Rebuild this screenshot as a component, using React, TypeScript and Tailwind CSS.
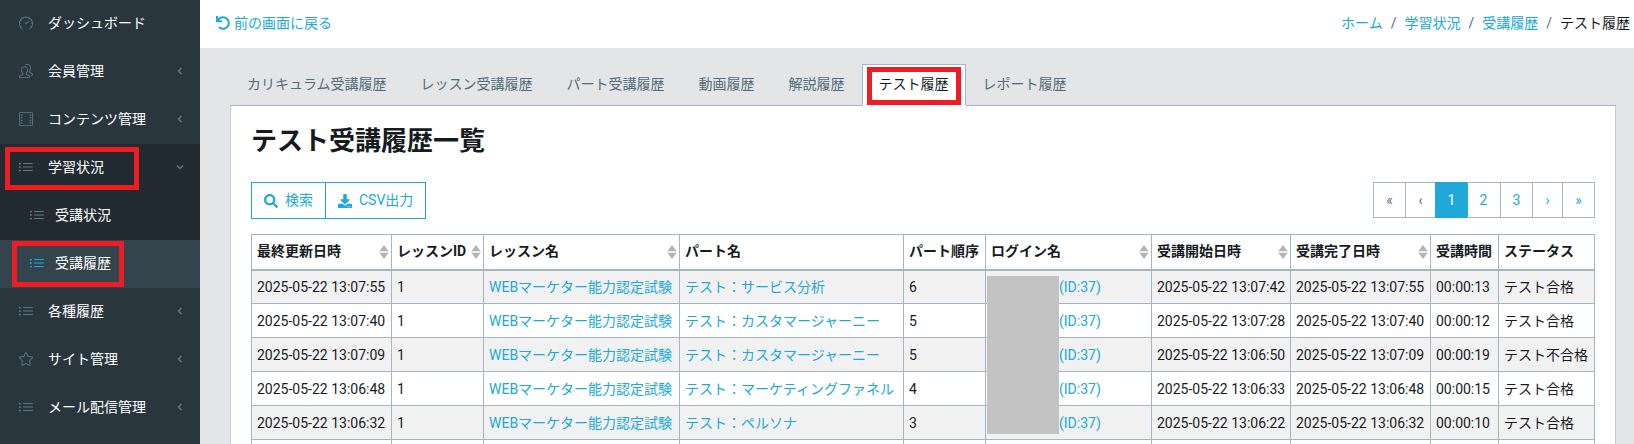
import type { ReactNode } from "react"
import type { IconType } from "react-icons"
import { FaDownload, FaSearch, FaUndo } from "react-icons/fa"
import { SlFilm, SlList, SlPeople, SlSpeedometer, SlStar } from "react-icons/sl"
import clsx from "clsx"

const tabs = [
  "カリキュラム受講履歴",
  "レッスン受講履歴",
  "パート受講履歴",
  "動画履歴",
  "解説履歴",
  "テスト履歴",
  "レポート履歴",
]

const columns = [
  { label: "最終更新日時", width: "w-[140px]", sortable: true },
  { label: "レッスンID", width: "w-[92px]", sortable: true },
  { label: "レッスン名", width: "w-[196px]", sortable: true },
  { label: "パート名", width: "w-[224px]" },
  { label: "パート順序", width: "w-[82px]" },
  { label: "ログイン名", width: "w-[166px]", sortable: true },
  { label: "受講開始日時", width: "w-[139px]", sortable: true },
  { label: "受講完了日時", width: "w-[140px]", sortable: true },
  { label: "受講時間", width: "w-[68px]" },
  { label: "ステータス", width: "w-[96px]" },
]

const rows = [
  { part: "テスト：サービス分析", order: 6, start: "13:07:42", end: "13:07:55", time: "00:00:13", status: "テスト合格" },
  { part: "テスト：カスタマージャーニー", order: 5, start: "13:07:28", end: "13:07:40", time: "00:00:12", status: "テスト合格" },
  { part: "テスト：カスタマージャーニー", order: 5, start: "13:06:50", end: "13:07:09", time: "00:00:19", status: "テスト不合格" },
  { part: "テスト：マーケティングファネル", order: 4, start: "13:06:33", end: "13:06:48", time: "00:00:15", status: "テスト合格" },
  { part: "テスト：ペルソナ", order: 3, start: "13:06:22", end: "13:06:32", time: "00:00:10", status: "テスト合格" },
]

const DATE = "2025-05-22"

/** Red frame that points the reader at a control. */
function Highlight({ className }: { className: string }) {
  return <span aria-hidden className={clsx("pointer-events-none absolute border-5 border-[#ee1c23]", className)} />
}

function Chevron({ open }: { open?: boolean }) {
  return (
    <svg viewBox="0 0 8 8" className={clsx("ml-auto h-2 w-2 text-[#5f7985]", open && "-rotate-90")} aria-hidden>
      <path d="M5.5 1 2.5 4l3 3" fill="none" stroke="currentColor" strokeWidth="1.5" />
    </svg>
  )
}

interface NavItemProps {
  icon: IconType
  label: string
  expandable?: boolean
  open?: boolean
  children?: ReactNode
}

function NavItem({ icon: Icon, label, expandable, open, children }: NavItemProps) {
  return (
    <a href="#" className="relative flex h-12 items-center pr-4 pb-[2px] pl-[19px] text-white">
      <Icon className="mr-[15px] h-[14px] w-[14px] shrink-0 text-[#5f7985]" />
      {label}
      {expandable && <Chevron open={open} />}
      {children}
    </a>
  )
}

function SubItem({ label, active }: { label: string; active?: boolean }) {
  return (
    <a href="#" className={clsx("relative flex h-12 items-center pb-[2px] pl-[30px] text-white", active && "bg-[#33444c]")}>
      <SlList className={clsx("mr-[11px] h-[14px] w-[14px] shrink-0", active ? "text-[#20a8d8]" : "text-[#5f7985]")} />
      {label}
      {active && <Highlight className="top-px left-3 h-[46px] w-28" />}
    </a>
  )
}

function Sidebar() {
  return (
    <nav className="w-[200px] shrink-0 bg-[#29363d]">
      <NavItem icon={SlSpeedometer} label="ダッシュボード" />
      <NavItem icon={SlPeople} label="会員管理" expandable />
      <NavItem icon={SlFilm} label="コンテンツ管理" expandable />
      <div className="bg-[#222b31]">
        <NavItem icon={SlList} label="学習状況" expandable open>
          <Highlight className="top-[3px] left-[5px] h-[43px] w-[134px]" />
        </NavItem>
        <SubItem label="受講状況" />
        <SubItem label="受講履歴" active />
      </div>
      <NavItem icon={SlList} label="各種履歴" expandable />
      <NavItem icon={SlStar} label="サイト管理" expandable />
      <NavItem icon={SlList} label="メール配信管理" expandable />
    </nav>
  )
}

function TopBar() {
  return (
    <header className="flex h-12 items-center justify-between bg-white pr-1 pb-[2px] pl-4">
      <a href="#" className="flex items-center gap-1 text-[#20a8d8]">
        <FaUndo className="h-[14px] w-[14px]" />
        前の画面に戻る
      </a>
      <ol className="flex gap-2">
        {["ホーム", "学習状況", "受講履歴"].map((label) => (
          <li key={label} className="flex gap-2">
            <a href="#" className="text-[#20a8d8]">{label}</a>
            <span className="text-[#536c79]">/</span>
          </li>
        ))}
        <li>テスト履歴</li>
      </ol>
    </header>
  )
}

function Tabs() {
  return (
    <div role="tablist" className="relative z-10 -mb-px flex">
      {tabs.map((label) => {
        const active = label === "テスト履歴"
        return (
          <button
            key={label}
            role="tab"
            aria-selected={active}
            className={clsx(
              "relative h-[42px] border px-4 pb-px",
              active ? "border-[#a4b7c1] border-b-white bg-white" : "border-transparent border-b-[#a4b7c1] text-[#536c79]",
            )}
          >
            {label}
            {active && <Highlight className="top-[2px] left-1 h-[38px] w-[94px]" />}
          </button>
        )
      })}
      <span className="flex-1 border-b border-[#a4b7c1]" />
    </div>
  )
}

function Pagination() {
  const item = "flex h-9 items-center justify-center border border-[#a4b7c1] -ml-px"
  return (
    <nav aria-label="ページ" className="flex pl-px text-[#20a8d8]">
      <button className={clsx(item, "w-[33px] text-[#536c79]")}>«</button>
      <button className={clsx(item, "w-[31px] text-[#536c79]")}>‹</button>
      <button className="-ml-px h-9 w-[33px] bg-[#20a8d8] text-white">1</button>
      <button className={clsx(item, "w-[34px] border-l-0")}>2</button>
      <button className={clsx(item, "w-[33px]")}>3</button>
      <button className={clsx(item, "w-[31px]")}>›</button>
      <button className={clsx(item, "w-[33px]")}>»</button>
    </nav>
  )
}

function SortIcon() {
  return (
    <svg viewBox="0 0 10 14" className="h-[14px] w-[10px] shrink-0 text-[#b4b4b4]" aria-hidden>
      <path d="M5 0 9.5 6h-9zM5 14 .5 8h9z" fill="currentColor" />
      <path d="M0 6.5h10v1H0z" fill="currentColor" opacity=".5" />
    </svg>
  )
}

function HistoryTable() {
  const cell = "border border-[#a4b7c1] px-[5px] pt-[2px] pb-0"
  return (
    <table className="mt-[15px] w-full table-fixed border-collapse text-left whitespace-nowrap">
      <colgroup>
        {columns.map((c) => (
          <col key={c.label} className={c.width} />
        ))}
      </colgroup>
      <thead>
        <tr className="h-[35px]">
          {columns.map((c) => (
            <th key={c.label} className="border border-b-2 border-[#a4b7c1] py-0 pr-[2px] pl-[5px] font-bold">
              <div className="flex items-center justify-between">
                {c.label}
                {c.sortable && <SortIcon />}
              </div>
            </th>
          ))}
        </tr>
      </thead>
      <tbody>
        {rows.map((r, i) => (
          <tr key={r.end} className="h-[34px] odd:bg-[#f1f1f1]">
            <td className={cell}>{DATE} {r.end}</td>
            <td className={cell}>1</td>
            <td className={cell}><a href="#" className="text-[#20a8d8]">WEBマーケター能力認定試験</a></td>
            <td className={cell}><a href="#" className="text-[#20a8d8]">{r.part}</a></td>
            <td className={cell}>{r.order}</td>
            <td className={clsx(cell, "relative")}>
              <a href="#" className="pl-[68px] text-[#20a8d8]">(ID:37)</a>
              {/* one mask covers the names of all rows */}
              {i === 0 && <span className="absolute top-[5px] left-px z-10 h-[158px] w-[72px] bg-[#c3c3c3]" />}
            </td>
            <td className={cell}>{DATE} {r.start}</td>
            <td className={cell}>{DATE} {r.end}</td>
            <td className={cell}>{r.time}</td>
            <td className={cell}>{r.status}</td>
          </tr>
        ))}
        <tr className="h-[34px] odd:bg-[#f1f1f1]">
          {columns.map((c) => (
            <td key={c.label} className={cell} />
          ))}
        </tr>
      </tbody>
    </table>
  )
}

export default function App() {
  return (
    <div className="flex h-screen overflow-hidden bg-[#e4e5e6] font-['Roboto','Noto_Sans_CJK_JP',sans-serif] text-[14px] leading-[21px] text-[#151b1e]">
      <Sidebar />
      <div className="min-w-0 flex-1">
        <TopBar />
        <main className="pt-4 pr-[18px] pl-[30px]">
          <Tabs />
          <section className="border border-[#c2cfd6] border-t-[#a4b7c1] bg-white p-5">
            <h1 className="text-[26px] leading-[30px] font-bold">テスト受講履歴一覧</h1>
            <div className="mt-[26px] flex items-start justify-between">
              <div className="flex text-[#20a8d8]">
                <button className="flex h-[37px] items-center gap-[7px] border border-[#20a8d8] px-3">
                  <FaSearch className="h-[14px] w-[14px]" />
                  検索
                </button>
                <button className="-ml-px flex h-[37px] items-center gap-[7px] border border-[#20a8d8] px-3">
                  <FaDownload className="h-[14px] w-[14px]" />
                  CSV出力
                </button>
              </div>
              <Pagination />
            </div>
            <HistoryTable />
          </section>
        </main>
      </div>
    </div>
  )
}
